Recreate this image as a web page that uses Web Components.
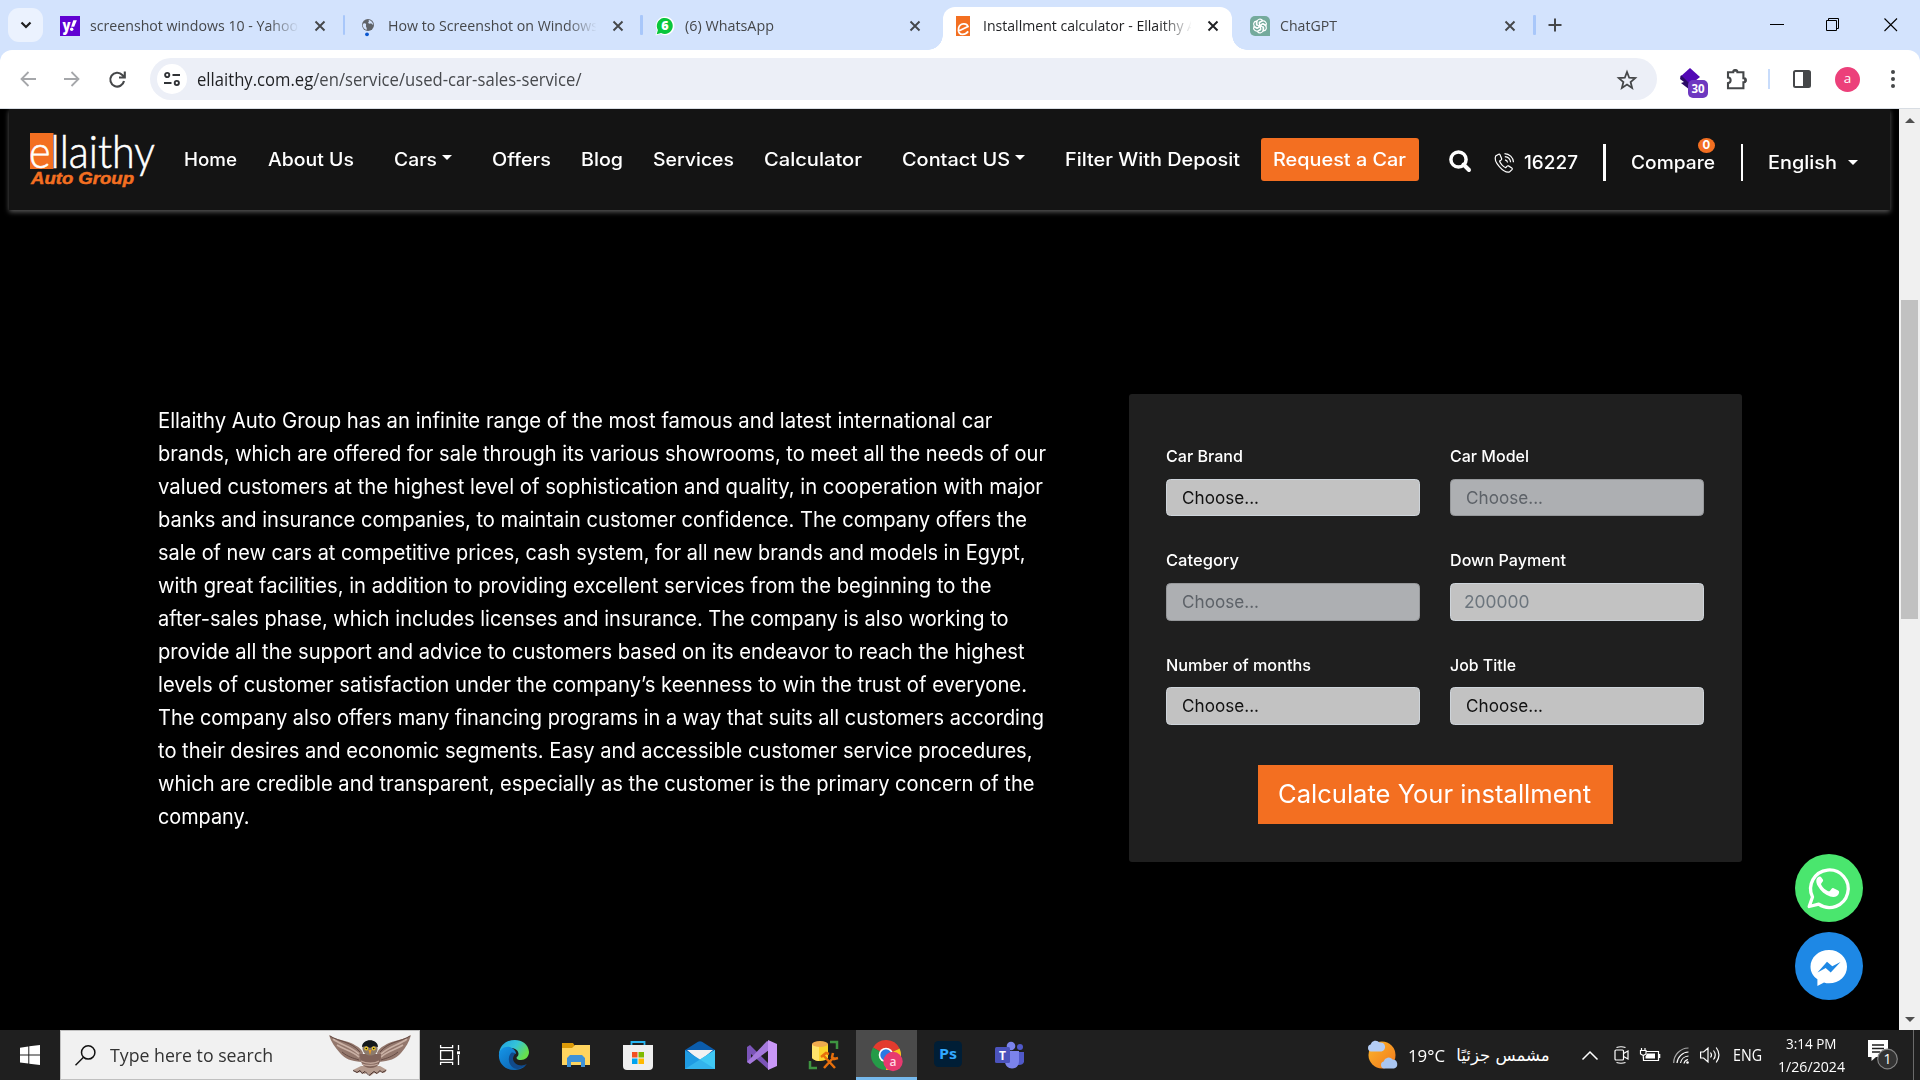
<!DOCTYPE html>
<html lang="en">
<head>
<meta charset="utf-8">
<title>Installment calculator - Ellaithy Auto Group</title>
<style>
html,body{margin:0;height:100%;background:#000;overflow:hidden}
desktop-screen{width:1920px;height:1080px}
</style>
</head>
<body>
<desktop-screen></desktop-screen>
<script>
const base = `*{box-sizing:border-box}svg{display:block;flex:none;overflow:visible}`;
function component(tag, css, html) {
  customElements.define(tag, class extends HTMLElement {
    connectedCallback() {
      if (this.shadowRoot) return;
      const root = this.attachShadow({ mode: 'open' });
      const t = document.createElement('template');
      t.innerHTML = `<style>${base}${css}</style>${typeof html === 'function' ? html(this) : html}`;
      root.appendChild(t.content.cloneNode(true));
    }
  });
}

/* Single line of text stretched to a set width (attribute w, in px). */
customElements.define('fit-text', class extends HTMLElement {
  connectedCallback() {
    if (this.shadowRoot) return;
    const root = this.attachShadow({ mode: 'open' });
    root.innerHTML = `<style>:host{display:block;white-space:nowrap;flex:none}span{display:inline-block;transform-origin:0 50%}</style><span><slot></slot></span>`;
    const w = +this.getAttribute('w');
    const span = root.querySelector('span');
    const natural = span.getBoundingClientRect().width;
    span.style.transform = `scaleX(${w / natural})`;
    this.style.width = w + 'px';
  }
});

component('nav-caret', `:host{display:block;flex:none;width:10px;height:5px}`,
  `<svg width="10" height="5"><path d="M0 0h10l-5 5z" fill="currentColor"/></svg>`);

component('browser-tab', `
:host{display:flex;align-items:center;height:50px;flex:none;color:#45474a;padding-top:1px;font:14.5px "Open Sans",sans-serif}
:host([active]){background:#fff;height:43px;margin-top:7px;border-radius:12px 12px 0 0;padding:0 0 6px;color:#1f2023;position:relative}
:host([active])::before,:host([active])::after{content:"";position:absolute;bottom:0;width:15px;height:15px}
:host([active])::before{left:-15px;background:radial-gradient(circle at 0 0,#d3e3fd 14.5px,#fff 15px)}
:host([active])::after{right:-15px;background:radial-gradient(circle at 100% 0,#d3e3fd 14.5px,#fff 15px)}
.ico{width:20px;height:20px;display:flex;align-items:center;justify-content:center;flex:none}
.txt{width:208px;margin-left:10px;overflow:hidden;flex:none}
:host([fade]) .txt{-webkit-mask-image:linear-gradient(90deg,#000 178px,transparent 209px);mask-image:linear-gradient(90deg,#000 178px,transparent 209px)}
.x{margin-left:16px}`,
  `<div class="ico"><slot name="icon"></slot></div><div class="txt"><slot></slot></div>
   <svg class="x" width="12" height="12" stroke="currentColor" stroke-width="1.9"><path d="M1.5 1.5l9 9M10.5 1.5l-9 9"/></svg>`);

component('tab-strip', `
:host{display:flex;height:50px;background:#d3e3fd;flex:none}
.drop{width:35px;height:34px;margin:8px 0 0 8px;border-radius:11px;background:#ebf2fe;display:flex;align-items:center;justify-content:center;flex:none}
i{width:2.5px;height:20px;margin-top:15px;background:#a8c7fa;border-radius:1px;flex:none}
.win{margin-top:18px}`,
  `<div class="drop"><svg width="12" height="8"><path d="M1.5 1.5L6 6l4.500-4.500" fill="none" stroke="#1f1f1f" stroke-width="2.200"/></svg></div>
  <browser-tab fade style="width:299.500px;padding-left:17px"><svg slot="icon" width="20" height="20"><rect width="20" height="20" fill="#6001d2"/><text x="2.500" y="14.500" font-family="Open Sans,sans-serif" font-weight="800" font-size="15" fill="#fff" textLength="8" lengthAdjust="spacingAndGlyphs">y</text><path d="M13.300 4.300h3.600l-2.700 6.500h-3.100z" fill="#fff"/><circle cx="11.700" cy="13.300" r="1.700" fill="#fff"/></svg><fit-text w="208">screenshot windows 10 - Yahoo</fit-text></browser-tab>
  <i></i>
  <browser-tab fade style="width:295px;padding-left:12.500px"><svg slot="icon" width="20" height="20"><circle cx="10" cy="9" r="6" fill="#5f6368"/><path d="M5.500 7.500c2-.5 3 .5 2.500 2s1.500 2 .5 4.500c-2-.6-3.600-2.600-3.900-5zM9.500 3.700c1.500.3 2 1.300 1 2.300s.5 2 2 1.500 2 1 2.700 1.500c0-2.500-2.500-5.300-5.700-5.300z" fill="#d3e3fd"/><circle cx="9" cy="18.300" r="1.900" fill="#0b57d0"/></svg><fit-text w="210">How to Screenshot on Windows</fit-text></browser-tab>
  <i></i>
  <browser-tab style="width:300px;padding-left:12px"><svg slot="icon" width="20" height="20"><path d="M.5 19.500l1.400-5.300A9.300 9.300 0 1 1 5.600 18z" fill="#fff"/><path d="M1.700 18.300l1.200-4.300a8 8 0 1 1 3.200 3z" fill="#09c63c"/><text x="9.800" y="14.300" text-anchor="middle" font-family="Open Sans,sans-serif" font-weight="800" font-size="12.500" fill="#fff">6</text></svg><fit-text w="89">(6) WhatsApp</fit-text></browser-tab>
  <browser-tab active fade style="width:289.500px;padding-left:10px"><svg slot="icon" width="14" height="20"><rect width="14" height="20" fill="#f36f21"/><path d="M2.200 15.300L12 10.500C10.500 6.500 4 7 2.600 12c-1 4.500 1.400 6.400 4 6.400 2.300 0 4-1 5.600-3" fill="none" stroke="#fff" stroke-width="1.700"/></svg><fit-text w="213">Installment calculator - Ellaithy A</fit-text></browser-tab>
  <browser-tab style="width:301px;padding-left:17.500px"><svg slot="icon" width="20" height="20"><path d="M5 0h10a5 5 0 0 1 5 5v15H5a5 5 0 0 1-5-5V5a5 5 0 0 1 5-5z" fill="#74aa9c"/><g fill="none" stroke="#fff" stroke-width="1.200" transform="translate(10 10)"><path d="M-3.100-.2V-4A3.100 3.100 0 0 1 2.500-5.600L-.5-3.900V1.600"/><path transform="rotate(60)" d="M-3.100-.2V-4A3.100 3.100 0 0 1 2.500-5.600L-.5-3.900V1.600"/><path transform="rotate(120)" d="M-3.100-.2V-4A3.100 3.100 0 0 1 2.500-5.600L-.5-3.900V1.600"/><path transform="rotate(180)" d="M-3.100-.2V-4A3.100 3.100 0 0 1 2.500-5.600L-.5-3.900V1.600"/><path transform="rotate(240)" d="M-3.100-.2V-4A3.100 3.100 0 0 1 2.500-5.600L-.5-3.900V1.600"/><path transform="rotate(300)" d="M-3.100-.2V-4A3.100 3.100 0 0 1 2.500-5.600L-.5-3.900V1.600"/></g></svg><fit-text w="57">ChatGPT</fit-text></browser-tab>
  <i></i>
  <svg width="14" height="14" style="margin:18px 0 0 12.500px"><path d="M7 .5v13M.5 7h13" stroke="#45474a" stroke-width="2"/></svg>
  <svg class="win" width="14" height="14" style="margin-left:208px"><path d="M0 6.500h14" stroke="#000"/></svg>
  <svg class="win" width="13" height="13" style="margin-left:42px" fill="none" stroke="#000"><path d="M.5 2.500h10v10h-10zM2.500 2.500v-2h10v10h-2"/></svg>
  <svg class="win" width="14" height="14" style="margin-left:45px"><path d="M.5.5l12.500 12.500M13 .5L.5 13" stroke="#000" stroke-width="1.100"/></svg>`);

component('browser-toolbar', `
:host{display:flex;height:59px;flex:none;background:#fff;border-bottom:1px solid #d8dde3;border-radius:12px 12px 0 0;align-items:center}
.omni{display:flex;align-items:center;width:1507px;height:42px;border-radius:21px;background:#eceff7;margin-left:24px;font:17.300px "Open Sans",sans-serif;color:#47494d;flex:none}
.chip{width:30px;height:30px;border-radius:50%;background:#fff;margin-left:6.500px;display:flex;align-items:center;justify-content:center;flex:none}
b{font-weight:400;color:#1f2023}
.ext{position:relative;width:30px;height:36px;margin-left:23px;flex:none}
.num{position:absolute;left:8px;top:19px;width:20px;height:18px;border-radius:5px;background:#6e38c0;color:#fff;font:700 11.500px/18px "Open Sans",sans-serif;text-align:center}
.av{width:25px;height:25px;border-radius:50%;background:#ec407a;color:#fff;font:13.500px/23px "Open Sans",sans-serif;text-align:center;margin-left:24.500px;flex:none}
.d{width:1.500px;height:20px;background:#c8dcfb;flex:none}`,
  `<svg width="16" height="16" style="margin-left:20px" fill="none" stroke="#a5a7aa" stroke-width="1.800"><path d="M16 8H1.500M8.500 1L1.500 8l7 7"/></svg>
  <svg width="16" height="16" style="margin-left:28px" fill="none" stroke="#a5a7aa" stroke-width="1.800"><path d="M0 8h14.500M7.500 1l7 7-7 7"/></svg>
  <svg width="17" height="17" style="margin-left:29px" fill="none" stroke="#454749" stroke-width="2.100"><path d="M15 10A6.900 6.900 0 1 1 13.300 4L16 6.300M15.800.5v6H10"/></svg>
  <div class="omni"><div class="chip"><svg width="16" height="14" fill="none" stroke="#303236" stroke-width="1.900"><circle cx="3.200" cy="3" r="2.100"/><path d="M8.500 3H16M0 11h7.500"/><circle cx="12.800" cy="11" r="2.100"/></svg></div>
  <fit-text w="384.500" style="margin-left:10px"><b>ellaithy.com.eg</b>/en/service/used-car-sales-service/</fit-text>
  <svg width="20" height="19" style="margin-left:1036px" fill="none" stroke="#454749" stroke-width="1.800"><path d="M10 2l2.200 5.700 6 .4-4.600 3.900 1.500 5.900L10 14.600l-5.100 3.300L6.400 12 1.800 8.100l6-.4z"/></svg></div>
  <div class="ext"><svg width="20" height="24" style="position:absolute;top:7px"><path d="M10 0l10 9-10 8L0 9z" fill="#5208b5"/><path d="M0 11l1-4 9 9v6L1 15l3-1z" fill="#2b0a66"/></svg><span class="num">30</span></div>
  <svg width="22" height="22" style="margin-left:16px" fill="none" stroke="#454749" stroke-width="2.100"><path d="M2 4.200h5.200a2 2 0 0 1 4.200 0h6v6a2 2 0 0 1 0 4.200v5.800H2v-5.100c3.500-.3 3.500-5.300 0-5.600z"/><path d="M8 3.200a1.500 1.500 0 0 1 2.700 0M18.500 10.500c1.600.5 1.600 3 0 3.500" stroke-width="2.400"/></svg>
  <div class="d" style="margin-left:20px"></div>
  <svg width="18" height="18" style="margin-left:23px"><rect x="1" y="1" width="16" height="16" rx="1.500" fill="none" stroke="#454749" stroke-width="2"/><path d="M10 1h7v16h-7z" fill="#454749"/></svg>
  <div class="av">a</div>
  <svg width="4" height="20" style="margin-left:30.500px" fill="#454749"><circle cx="2" cy="3" r="2"/><circle cx="2" cy="10" r="2"/><circle cx="2" cy="17" r="2"/></svg>`);

component('site-header', `
:host{display:flex;align-items:center;height:101px;margin:0 9px 0 9px;padding-left:21px;background:#141414;box-shadow:0 2px 5px 0 #5a5a5a;color:#fff;font:500 18px "Inter",sans-serif;flex:none;clip-path:inset(0 -8px -9px -8px)}
.btn{width:158px;height:43px;border-radius:3px;background:#f36f21;display:flex;align-items:center;padding-left:12px;margin-left:21px;flex:none}
.r{display:flex;align-items:center;height:38px;margin-top:6px;flex:none}
.l{width:3px;height:37px;background:#fff;margin-left:25px}
.cmp{position:relative;margin-left:25px}
.bd{position:absolute;left:67px;top:-14px;width:17px;height:15px;border-radius:50%;background:#f36f21;font:700 11.500px/15px "Inter",sans-serif;text-align:center}`,
  `<svg width="124" height="54" style="margin-top:1px"><rect width="23.500" height="36" fill="#f36f21"/><text x="-1" y="35" fill="#fff" stroke="#fff" stroke-width=".6" font-family="Lato,sans-serif" font-weight="300" font-size="46" textLength="126" lengthAdjust="spacingAndGlyphs">ellaithy</text><text x="1" y="50.500" fill="#f36f21" font-family="Liberation Sans,sans-serif" font-weight="700" font-style="italic" font-size="16.500" textLength="103" lengthAdjust="spacingAndGlyphs" stroke="#f36f21" stroke-width=".5">Auto Group</text></svg>
  <fit-text w="53" style="margin-left:30px">Home</fit-text>
  <fit-text w="86" style="margin-left:31px">About Us</fit-text>
  <fit-text w="43" style="margin-left:40px">Cars</fit-text><nav-caret style="margin:-4px 0 0 5px"></nav-caret>
  <fit-text w="59" style="margin-left:40px">Offers</fit-text>
  <fit-text w="42" style="margin-left:30px">Blog</fit-text>
  <fit-text w="81" style="margin-left:30px">Services</fit-text>
  <fit-text w="98" style="margin-left:30px">Calculator</fit-text>
  <fit-text w="108" style="margin-left:40px">Contact US</fit-text><nav-caret style="margin:-4px 0 0 5px"></nav-caret>
  <fit-text w="175" style="margin-left:40px">Filter With Deposit</fit-text>
  <div class="btn"><fit-text w="133">Request a Car</fit-text></div>
  <div class="r">
  <svg width="22" height="22" style="margin:-3px 0 0 30px" fill="none" stroke="#fff" stroke-width="3.500"><circle cx="9.500" cy="9.500" r="7.600"/><path d="M14.500 14.500l5.500 5.500" stroke-width="4" stroke-linecap="round"/></svg>
  <svg width="20" height="20" style="margin-left:22.500px" fill="none" stroke="#fff" stroke-width="1.200"><path d="M4.700 1.200L1.700 3C-1 8.500 9.500 20.500 15.500 19l2.700-2.700c.3-.6.100-1-.4-1.400l-3.300-2c-.6-.3-1-.2-1.400.3l-1.400 1.500C9 13.800 6.200 10.500 5.600 8l1.600-1.100c.5-.4.600-.9.400-1.400L6 1.700c-.3-.6-.7-.8-1.300-.5zM11 6.800c1.600.3 2.400 1.200 2.600 2.700M10.800 3.600c3.300.2 5.500 2.500 5.800 5.700M10.500.6c5 .2 8.600 3.800 9 8.600"/></svg>
  <fit-text w="54" style="margin-left:10.500px">16227</fit-text>
  <div class="l"></div>
  <div class="cmp"><fit-text w="84">Compare</fit-text><span class="bd">0</span></div>
  <div class="l" style="width:2px;margin-left:26px"></div>
  <fit-text w="69" style="margin-left:25px">English</fit-text><nav-caret style="margin-left:11px"></nav-caret>
  </div>`);

component('service-text', `
:host{display:block;flex:none;color:#fff;font:430 20.800px/33px "Inter",sans-serif}`,
  [[834.500,'Ellaithy Auto Group has an infinite range of the most famous and latest international car'],
   [888,'brands, which are offered for sale through its various showrooms, to meet all the needs of our'],
   [885,'valued customers at the highest level of sophistication and quality, in cooperation with major'],
   [869,'banks and insurance companies, to maintain customer confidence. The company offers the'],
   [867.500,'sale of new cars at competitive prices, cash system, for all new brands and models in Egypt,'],
   [833.500,'with great facilities, in addition to providing excellent services from the beginning to the'],
   [850.500,'after-sales phase, which includes licenses and insurance. The company is also working to'],
   [866.500,'provide all the support and advice to customers based on its endeavor to reach the highest'],
   [869,'levels of customer satisfaction under the company’s keenness to win the trust of everyone.'],
   [886,'The company also offers many financing programs in a way that suits all customers according'],
   [874.500,'to their desires and economic segments. Easy and accessible customer service procedures,'],
   [876.500,'which are credible and transparent, especially as the customer is the primary concern of the'],
   [91.500,'company.']].map(l => `<fit-text w="${l[0]}">${l[1]}</fit-text>`).join(''));

component('form-field', `
:host{display:block;width:254px;flex:none}
label{display:block;height:20px;margin-bottom:12.700px;color:#fff;font:500 16.500px/20px "Inter",sans-serif}
.box{height:37.500px;border:1px solid #ced4da;border-radius:4.500px;background:#c2c2c2;color:#111;font:400 17.800px/36px "Inter",sans-serif;padding-left:15px}
:host([off]) .box{background:#adafb2;border-color:#96989b;color:#5d6268}
:host([input]) .box{color:#6c757d;padding-left:13px}`,
  el => `<label><fit-text w="${el.getAttribute('lw')}">${el.getAttribute('label')}</fit-text></label>
  <div class="box"><fit-text w="${el.hasAttribute('input') ? 65.500 : 77}">${el.getAttribute('value')}</fit-text></div>`);

component('installment-form', `
:host{display:flex;flex-direction:column;align-items:center;width:613px;height:468px;background:#1f1f1f;border-radius:3px;padding:52px 37px 0;flex:none}
.grid{display:grid;grid-template-columns:254px 254px;column-gap:30px;row-gap:34.200px;width:539px;margin-left:-1px}
.go{width:355px;height:59px;margin-top:40px;background:#f36f21;color:#fff;font:400 25px/59px "Inter",sans-serif;padding-left:20px}`,
  `<div class="grid">
  <form-field label="Car Brand" lw="77" value="Choose..."></form-field>
  <form-field label="Car Model" lw="79" value="Choose..." off></form-field>
  <form-field label="Category" lw="73" value="Choose..." off></form-field>
  <form-field label="Down Payment" lw="116" value="200000" input></form-field>
  <form-field label="Number of months" lw="145" value="Choose..."></form-field>
  <form-field label="Job Title" lw="66" value="Choose..."></form-field>
  </div><div class="go"><fit-text w="313">Calculate Your installment</fit-text></div>`);

component('page-scrollbar', `
:host{display:flex;flex-direction:column;align-items:center;width:21px;height:921px;background:#f0f0f0;flex:none}
.th{width:17px;height:319px;background:#c1c1c1;margin-top:176px}`,
  `<svg width="10" height="6" style="margin-top:9px"><path d="M0 5L5 0l5 5z" fill="#505050"/></svg><div class="th"></div>
   <svg width="10" height="6" style="margin-top:398px"><path d="M0 0h10L5 5z" fill="#505050"/></svg>`);

component('site-page', `
:host{display:flex;height:921px;flex:none;background:#000;position:relative}
.view{width:1899px;display:flex;flex-direction:column;flex:none}
.row{display:flex;padding:184px 0 0 157.500px}
service-text{margin-top:10px;width:971.500px}
.fab{position:absolute;left:1795px;width:68px;height:68px}`,
  `<div class="view"><site-header></site-header>
  <div class="row"><service-text></service-text><installment-form></installment-form></div></div>
  <page-scrollbar></page-scrollbar>
  <svg class="fab" style="top:745px" viewBox="0 0 68 68"><circle cx="34" cy="34" r="34" fill="#4ae66e"/><g transform="translate(-1.300 -.5)"><path d="M15.500 53l3.300-9.500A18.800 18.800 0 1 1 25 50.700z" fill="none" stroke="#fff" stroke-width="3.300" stroke-linejoin="round"/><path d="M25 23.300c-3 1.500-3 5.500-1 9 3 5.500 7 9 12.500 10.700 4 1.200 8 .2 8.800-3.500.3-1.500.1-2-.9-2.600l-4.500-2.200c-.9-.4-1.500-.2-2 .5l-1.700 2.200c-.4.500-1 .6-1.700.3-3-1.300-5.200-3.300-7-6.400-.3-.6-.2-1 .2-1.500l1.500-2c.3-.6.300-1 .1-1.600L27.500 23.800c-.3-1-1.300-1.200-2.500-.5z" fill="#fff"/></g></svg>
  <svg class="fab" style="top:823px" viewBox="0 0 68 68"><circle cx="34" cy="34" r="34" fill="#1e88e5"/><path d="M34 18c-10.500 0-18.500 7.500-18.500 16.700 0 5 2.400 9.500 6.900 12.500V54l6.600-3.600c1.600.6 3.300.8 5 .8 10.500 0 18-7.400 18-16.500S44.500 18 34 18z" fill="#fff"/><path d="M22.500 40.500L32 29.700l5.300 4.500 8.200-4.300L35.700 40.600l-5-4.700z" fill="#1e88e5"/></svg>`);

component('task-bar', `
:host{display:flex;align-items:center;height:50px;background:#1f1f1f;flex:none;color:#fff;font:16px "Open Sans",sans-serif}
.s{display:flex;align-items:center;width:360px;height:50px;margin-left:20px;background:#f1f1f1;border:1px solid #c0c0c0;color:#333;font-size:18px;flex:none}
.on{width:61px;height:50px;background:#4b4b4b;border-bottom:3px solid #76b9ed;display:flex;align-items:center;justify-content:center;padding-top:3px;flex:none}
.clock{display:flex;flex-direction:column;align-items:center;width:67px;margin-left:16.500px;font-size:14.500px;line-height:23px;flex:none}
.ar{width:94px;font:16.500px "DejaVu Sans",sans-serif;margin-left:11px;text-align:center;white-space:nowrap;flex:none}
.end{width:1px;height:50px;background:#6a6a6a;margin-left:15px}`,
  `<svg width="20" height="20" style="margin-left:20px" fill="#fff"><path d="M0 2.700l8.300-1.200v8H0zM9.300 1.300L20 0v9.500H9.300zM0 10.500h8.300v8L0 17.400zM9.300 10.500H20V20L9.300 18.700z"/></svg>
  <div class="s"><svg width="21" height="21" style="margin-left:14px" fill="none" stroke="#111" stroke-width="1.500"><circle cx="13.200" cy="7.400" r="6.700"/><path d="M8.500 12.300L.5 20.200"/></svg>
  <fit-text w="163" style="margin-left:14px">Type here to search</fit-text>
  <svg width="84" height="42" viewBox="0 0 84 42" style="margin:0 0 0 56px"><path d="M32 28C22 27 16 25 11 19 6 13 2 8 0 1c8 5 15 5 22 8 6 3 10 5 12 10zM50 28c10-1 17-3 22-9 5-6 8-11 10-18-8 5-15 5-22 8-6 3-10 5-12 10z" fill="#93776c"/><path d="M4 5c8 6 17 7 26 15M8 11c8 5 15 6 22 12M78 5c-8 6-17 7-26 15M74 11c-8 5-15 6-22 12" fill="none" stroke="#c9b0a4" stroke-width="1.700"/><path d="M1 2c9 6 21 5 30 16M13 18c6 5 11 6 17 8M81 2c-9 6-21 5-30 16M69 18c-6 5-11 6-17 8" fill="none" stroke="#664c45" stroke-width="1"/><path d="M24 36l8-4h19l7 4-3 3-4-1-3 2-3-1-3.500 3L38 39l-3 1-3-2-4 1z" fill="#b59b8e"/><path d="M24 36.500l4 2 3-2 2 3 3-2 4 4 5-4 3 2 3-3 2 2 4-2" stroke="#4a332f" fill="none"/><path d="M31 20h21c0 9-3 14-10.500 14S31 29 31 20z" fill="#80635a"/><path d="M32 27c5 3 14 3 18 0M33 30c4 2 12 2 16 0" stroke="#bfa497" stroke-width="1.300" fill="none"/><path d="M33.500 14c0-10 15-10 15 0 1 10-15 10-15 0z" fill="#8c7a6c"/><path d="M33 13c0-9 16-9 16 0l-4.500-1-3.500 2-3.500-2z" fill="#14191d"/><circle cx="37.300" cy="14.500" r="1.900" fill="#ebc928"/><circle cx="44.700" cy="14.500" r="1.900" fill="#ebc928"/><circle cx="37.300" cy="14.500" r=".8" fill="#111"/><circle cx="44.700" cy="14.500" r=".8" fill="#111"/><path d="M39.500 16h3L41 21z" fill="#e99a26"/></svg></div>
  <svg width="20" height="20" style="margin-left:20px" fill="none" stroke="#fff" stroke-width="1.300"><path d="M.6 5.700h12v9H.6zM.6 0v2.600h12V0M.6 20v-2.600h12V20M18.500 0v5M18.500 10v10"/><path d="M17 6.300h3v3h-3z" fill="#fff" stroke="none"/></svg>
  <svg width="30" height="30" style="margin-left:39px"><defs><linearGradient id="e1" x1="0" x2="1" y2=".5"><stop offset="0" stop-color="#1d9de4"/><stop offset=".55" stop-color="#35c4d8"/><stop offset="1" stop-color="#67e04c"/></linearGradient><linearGradient id="e2" x1="0" x2="1" y2="1"><stop offset="0" stop-color="#1597ea"/><stop offset="1" stop-color="#0c59a4"/></linearGradient></defs><path d="M0 15C0-4 29-5 30 12c0 5-4 8-8 8s-6-2-3-4c2-4-2-8-7-8S1 11 0 15z" fill="url(#e1)"/><path d="M0 14c1-6 8-9 13-6 3 2 4 4 4 6-2-2-6 2-4 7s8 7 14 4c-3 4-8 5-12 5C6 30-1 23 0 14z" fill="url(#e2)"/><path d="M12 13c-5 6-1 16 7 16 4-1 7-3 9-5-6 3-13 1-14-5 0-2 1-4 2-5-1-1-2-2-4-1z" fill="#114a8b"/></svg>
  <svg width="28" height="24" style="margin-left:33px"><path d="M0 0h11l2 3v5H0z" fill="#dc9a08"/><path d="M0 5h10l3-3h15v20H0z" fill="#ffd45e"/><path d="M5 24v-9l3-3h12l3 3v9h-4v-5H9v5z" fill="#3f92d7"/></svg>
  <svg width="30" height="30" style="margin-left:33px"><path d="M8.500 6V2h13v4" fill="none" stroke="#27b5f2" stroke-width="1.800"/><path d="M0 5h30v21q0 4-4 4H4q-4 0-4-4z" fill="#efefef"/><path d="M9 12h5.500v5.500H9z" fill="#f25022"/><path d="M15.500 12H21v5.500h-5.500z" fill="#7fba00"/><path d="M9 18.500h5.500V24H9z" fill="#00a4ef"/><path d="M15.500 18.500H21V24h-5.500z" fill="#ffb900"/></svg>
  <svg width="30" height="28" style="margin-left:32px"><path d="M0 9L13 .8q2-1.300 4 0L30 9v10H0z" fill="#0b5cab"/><path d="M2 9h26L15 20z" fill="#f2f2f2"/><path d="M0 9l30 19H0z" fill="#1f9be2"/><path d="M30 9L0 28h30z" fill="#33b3ec"/><path d="M30 9v19L15 18.500z" fill="#40c8f4"/></svg>
  <svg width="30" height="30" style="margin-left:32px"><path d="M0 7l3-2 19 19v6L4 14v8l-1 2-3-2z" fill="#7b54b8"/><path d="M0 22L20 1l4 2-2 7L3 24z" fill="#a579dc"/><path d="M21 0l9 4v22l-9 4z" fill="#c997f7"/></svg>
  <svg width="29" height="30" style="margin-left:32px"><path d="M3 4v14c3 4 13 4 16 0V4z" fill="#fcd42b"/><path d="M3 4v14c2 2 4 3 7 3V4z" fill="#ffe46a"/><ellipse cx="11" cy="4" rx="8" ry="3" fill="#f0ab4e"/><path d="M21 2h7v7M1 21v7h7" fill="none" stroke="#3e9441" stroke-width="2.500"/><path d="M15 28l10-11M14 15l12 13M12 17l5-4 3 1M24 13l-1 4 2 2 4-1" fill="none" stroke="#e76f0c" stroke-width="2.500"/></svg>
  <div class="on" style="margin-left:18px"><svg width="31" height="31"><path d="M15 15L2 7.500A15 15 0 0 1 28.600 8.500z" fill="#e33b2e"/><path d="M15 15L28.600 8.500A15 15 0 0 1 15 30z" fill="#fcc31e"/><path d="M15 15v15A15 15 0 0 1 2 7.500z" fill="#259b48"/><circle cx="15" cy="15" r="7.300" fill="#fff"/><circle cx="15" cy="15" r="5.700" fill="#2a78e4"/><circle cx="22" cy="21.500" r="9.700" fill="#e7396f"/><text x="22" y="25.500" text-anchor="middle" font-family="Open Sans,sans-serif" font-size="12" font-weight="600" fill="#ffd8e4">a</text></svg></div>
  <svg width="28" height="26" style="margin:-2px 0 0 17px"><rect width="28" height="26" rx="4.500" fill="#001e36"/><text x="5" y="18" font-family="Open Sans,sans-serif" font-weight="700" font-size="15" fill="#31a8ff" textLength="18" lengthAdjust="spacingAndGlyphs">Ps</text></svg>
  <svg width="30" height="28" style="margin-left:33px"><circle cx="16" cy="5" r="4.300" fill="#7b83eb"/><circle cx="25" cy="6" r="3" fill="#5059c9"/><path d="M22 11h7v10q-1 3-5 3h-2z" fill="#5059c9"/><path d="M10 10h14v10c0 5-3 7.500-7 7.500s-7-3-7-7z" fill="#7b83eb"/><rect y="6" width="15" height="16" rx="1.500" fill="#4b53bc"/><text x="7.500" y="18.500" text-anchor="middle" font-family="Open Sans,sans-serif" font-weight="700" font-size="12" fill="#fff">T</text></svg>
  <svg width="30" height="30" style="margin:-2px 0 0 342px"><defs><linearGradient id="sun" x2="1" y2="1"><stop offset="0" stop-color="#fbb62b"/><stop offset="1" stop-color="#f2781c"/></linearGradient></defs><circle cx="15" cy="16" r="13.500" fill="url(#sun)"/><path d="M4 12.500a3.600 3.600 0 0 1-.4-7A5.200 5.200 0 0 1 12.500 3.500a4.600 4.600 0 0 1 2 9z" fill="#b4cdf5"/><path d="M17 29.500a3.600 3.600 0 0 1-.4-7 5.200 5.200 0 0 1 9-2A4.600 4.600 0 0 1 27 29.500z" fill="#a9c6f2"/></svg>
  <fit-text w="37" style="margin-left:11px;font-size:16.500px">19°C</fit-text>
  <div class="ar" dir="rtl">مشمس جزئيًا</div>
  <svg width="16" height="9" style="margin-left:32px" fill="none" stroke="#fff" stroke-width="1.500"><path d="M.5 8.500L8 1l7.500 7.500"/></svg>
  <svg width="15" height="18" style="margin-left:16px" fill="none" stroke="#fff" stroke-width="1.200"><rect x="1" y="4" width="8.500" height="10" rx="1"/><path d="M9.500 7.500L14 5v8l-4.500-2.500M2.500 1.500q4.500-1.500 9 0M2.500 16.500q4.500 1.500 9 0"/></svg>
  <svg width="20" height="14" style="margin-left:11px" fill="none" stroke="#fff" stroke-width="1.200"><path d="M5.500 3.500h13v9h-15V9M18.500 6.500h1.200v3h-1.200M1.500 0v2.500M5 0v2.500M.5 2.500H6V6L3.300 7.500.5 6zM3.300 7.500v3"/><path d="M7 5.500h8v5H5.500V8.500z" fill="#fff" stroke="none"/></svg>
  <svg width="17" height="17" style="margin-left:13px" fill="none" stroke="#fff" stroke-width="1.200"><g stroke="#a9a9a9"><path d="M.7 16A15 15 0 0 1 15.500 1"/></g><path d="M4 16A12 12 0 0 1 15.500 5M7.500 16A8.500 8.500 0 0 1 15.500 9M11 16.500a5 5 0 0 1 4-4"/><circle cx="14.500" cy="15.500" r="1.300" fill="#fff" stroke="none"/></svg>
  <svg width="20" height="18" style="margin-left:10px" fill="none" stroke="#fff" stroke-width="1.200"><path d="M.6 6h3L8 2v14l-4.400-4h-3zM10.500 6.500q2 2.500 0 5M13.500 4.500q3.500 4.500 0 9M16.200 1.500q5.500 7.500 0 15"/></svg>
  <fit-text w="29" style="margin-left:12.500px">ENG</fit-text>
  <div class="clock"><fit-text w="50.500">3:14 PM</fit-text><fit-text w="67">1/26/2024</fit-text></div>
  <svg width="30" height="32" style="margin-left:23px"><path d="M0 1h20v17H8l-4.500 4v-4H0z" fill="#fff"/><path d="M4 6h12M4 9.500h12M4 13h8" stroke="#1f1f1f" stroke-width="1.300"/><circle cx="19.500" cy="20" r="9.800" fill="#333" stroke="#858585" stroke-width="1.200"/><text x="19.500" y="25.200" text-anchor="middle" font-family="Open Sans,sans-serif" font-size="14" fill="#fff">1</text></svg>
  <div class="end"></div>`);

component('desktop-screen', `:host{display:flex;flex-direction:column;overflow:hidden}.tb{background:#d3e3fd;flex:none}`,
  `<tab-strip></tab-strip><div class="tb"><browser-toolbar></browser-toolbar></div><site-page></site-page><task-bar></task-bar>`);
</script>
</body>
</html>
